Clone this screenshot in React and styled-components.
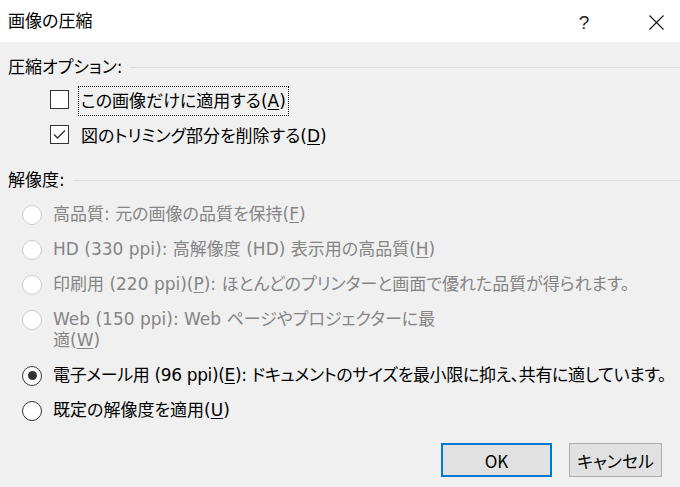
import React from 'react'
import styled, { createGlobalStyle } from 'styled-components'

const GlobalStyle = createGlobalStyle`
  html, body {
    margin: 0;
    padding: 0;
    background: #f0f0f0;
  }
  body {
    font-family: "DejaVu Sans", "Noto Sans CJK JP", sans-serif;
    font-feature-settings: "palt";
    color: #000;
  }
`

const Dialog = styled.div`
  width: 680px;
  height: 487px;
  display: flex;
  flex-direction: column;
  background: #f0f0f0;
  overflow: hidden;
`

const TitleBar = styled.div`
  height: 42px;
  flex: none;
  background: #fff;
  display: flex;
  align-items: center;
  padding-left: 8px;
`

const TitleText = styled.div`
  flex: 1;
  font-size: 17px;
  line-height: 22px;
`

const HelpButton = styled.div`
  width: 20px;
  margin-right: 54px;
  margin-top: 3px;
  font-family: "Liberation Sans", sans-serif;
  font-size: 19px;
  color: #222;
  text-align: center;
`

const CloseButton = styled.div`
  width: 16px;
  height: 16px;
  margin-right: 16px;
  margin-top: 3px;
  display: flex;
  align-items: center;
  justify-content: center;
`

const Body = styled.div`
  flex: 1;
  display: flex;
  flex-direction: column;
  padding: 14px 8px 0 8px;
`

const SectionHeader = styled.div`
  display: flex;
  align-items: center;
  gap: 8px;
  height: 22px;
  font-size: 17px;
  line-height: 22px;
  margin-top: ${p => p.$top || 0}px;
`

const Rule = styled.div`
  flex: 1;
  height: 1px;
  background: #dcdcdc;
  margin-right: -8px;
`

const CheckList = styled.div`
  display: flex;
  flex-direction: column;
  gap: 5px;
  margin-top: 8px;
  padding-left: 42px;
`

const CheckRow = styled.label`
  display: flex;
  align-items: center;
  height: 30px;
`

const Box = styled.span`
  width: 17px;
  height: 17px;
  flex: none;
  border: 1px solid #333;
  background: #fff;
  display: flex;
  align-items: center;
  justify-content: center;
  margin-top: -3px;
`

const CheckLabel = styled.span`
  margin-left: 9px;
  padding: 3px 2px;
  border: 1px dotted ${p => (p.$focused ? '#000' : 'transparent')};
  font-size: 17px;
  line-height: 22px;
`

const RadioList = styled.div`
  display: flex;
  flex-direction: column;
  gap: 14px;
  margin-top: 13px;
  padding-left: 14px;
`

const RadioRow = styled.label`
  display: flex;
  align-items: flex-start;
  gap: 11px;
  font-size: 17px;
  line-height: 21px;
  white-space: nowrap;
  letter-spacing: ${p => (p.$tight ? '-0.35px' : '0')};
  color: ${p => (p.$disabled ? '#858585' : '#000')};
`

const RadioCircle = styled.span`
  width: 18px;
  height: 18px;
  flex: none;
  margin-top: 0.5px;
  border-radius: 50%;
  border: 1px solid ${p => (p.$disabled ? '#cccccc' : '#333')};
  background: #fff;
  display: flex;
  align-items: center;
  justify-content: center;

  &::after {
    content: '';
    display: ${p => (p.$checked ? 'block' : 'none')};
    width: 9px;
    height: 9px;
    border-radius: 50%;
    background: #333;
  }
`

const Footer = styled.div`
  margin-top: auto;
  display: flex;
  justify-content: flex-end;
  gap: 17px;
  padding: 0 10px 10px 0;
`

const Button = styled.button`
  width: ${p => p.$width}px;
  height: 34px;
  box-sizing: border-box;
  background: #e1e1e1;
  border: ${p => (p.$primary ? '2px solid #0078d7' : '1px solid #adadad')};
  font-family: "Noto Sans CJK JP", sans-serif;
  font-feature-settings: "palt";
  font-size: 17px;
  color: #000;
  padding: 0;
`

const Mnemonic = styled.u`
  text-underline-offset: 2px;
`

const radios = [
  { label: <>高品質: 元の画像の品質を保持(<Mnemonic>F</Mnemonic>)</>, disabled: true },
  { label: <>HD (330 ppi): 高解像度 (HD) 表示用の高品質(<Mnemonic>H</Mnemonic>)</>, disabled: true },
  { label: <>印刷用 (220 ppi)(<Mnemonic>P</Mnemonic>): ほとんどのプリンターと画面で優れた品質が得られます。</>, disabled: true },
  { label: <>Web (150 ppi): Web ページやプロジェクターに最<br />適(<Mnemonic>W</Mnemonic>)</>, disabled: true },
  { label: <>電子メール用 (96 ppi)(<Mnemonic>E</Mnemonic>): ドキュメントのサイズを最小限に抑え、共有に適しています。</>, checked: true, tight: true },
  { label: <>既定の解像度を適用(<Mnemonic>U</Mnemonic>)</> }
]

export default function App() {
  return (
    <>
      <GlobalStyle />
      <Dialog>
        <TitleBar>
          <TitleText>画像の圧縮</TitleText>
          <HelpButton>?</HelpButton>
          <CloseButton>
            <svg width="15" height="15" viewBox="0 0 15 15">
              <path d="M0.5 0.5 L14.5 14.5 M14.5 0.5 L0.5 14.5" stroke="#111" strokeWidth="1.1" fill="none" />
            </svg>
          </CloseButton>
        </TitleBar>

        <Body>
          <SectionHeader>
            <span>圧縮オプション:</span>
            <Rule />
          </SectionHeader>
          <CheckList>
            <CheckRow>
              <Box />
              <CheckLabel $focused>この画像だけに適用する(<Mnemonic>A</Mnemonic>)</CheckLabel>
            </CheckRow>
            <CheckRow>
              <Box>
                <svg width="13" height="11" viewBox="0 0 13 11">
                  <path d="M1 5.5 L4.5 9 L12 1.5" stroke="#333" strokeWidth="1.4" fill="none" />
                </svg>
              </Box>
              <CheckLabel>図のトリミング部分を削除する(<Mnemonic>D</Mnemonic>)</CheckLabel>
            </CheckRow>
          </CheckList>

          <SectionHeader $top={18}>
            <span>解像度:</span>
            <Rule />
          </SectionHeader>
          <RadioList>
            {radios.map((r, i) => (
              <RadioRow key={i} $disabled={r.disabled} $tight={r.tight}>
                <RadioCircle $disabled={r.disabled} $checked={r.checked} />
                <span>{r.label}</span>
              </RadioRow>
            ))}
          </RadioList>

          <Footer>
            <Button $primary $width={111}>OK</Button>
            <Button $width={93}>キャンセル</Button>
          </Footer>
        </Body>
      </Dialog>
    </>
  )
}
